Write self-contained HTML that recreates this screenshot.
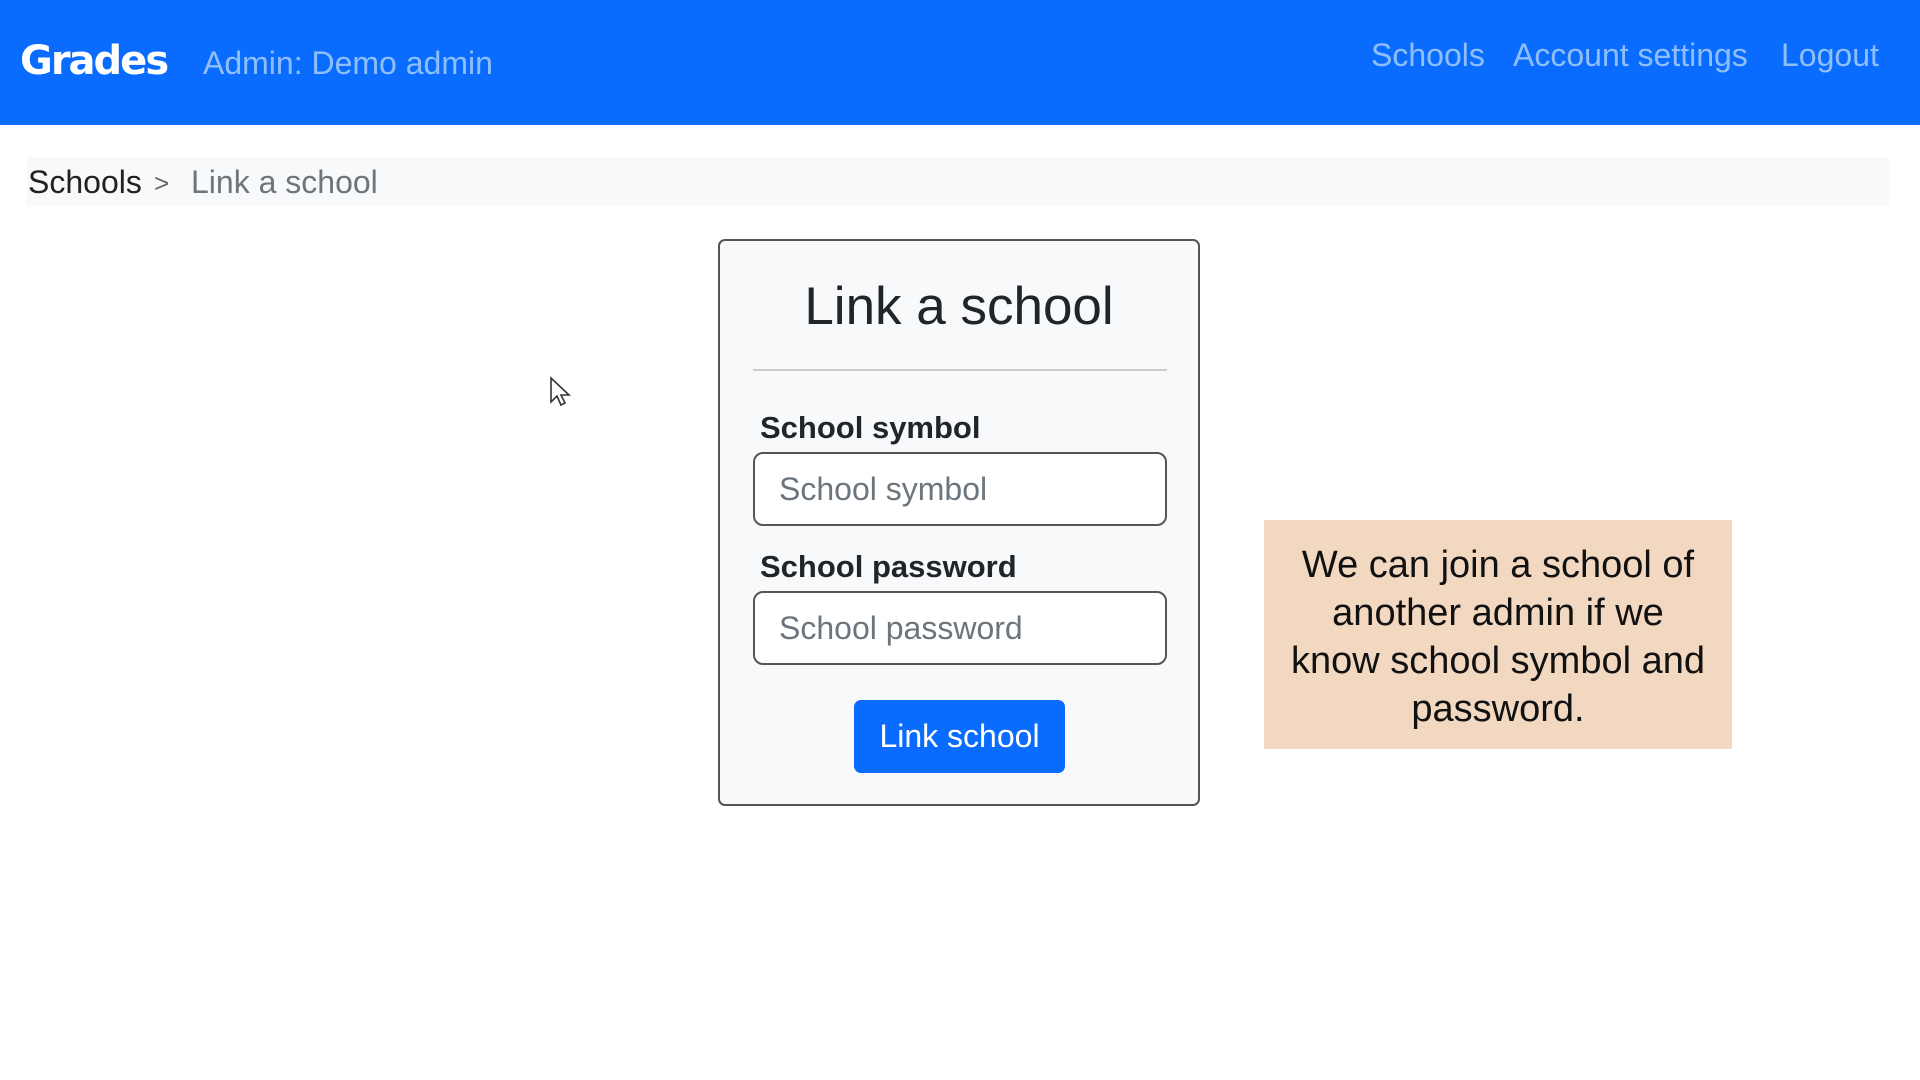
<!DOCTYPE html>
<html><head><meta charset="utf-8"><style>
*{margin:0;padding:0;box-sizing:border-box}
body{width:1920px;height:1080px;background:#fff;font-family:"Liberation Sans",sans-serif;position:relative;overflow:hidden;color:#212529}
.nav{position:absolute;left:0;top:0;width:1920px;height:125px;background:#0a6cff}
.abs{position:absolute;white-space:nowrap}
.logo{left:20px;top:38px;font-size:40px;font-weight:900;color:#fff;font-family:"DejaVu Sans",sans-serif;letter-spacing:-2px}
.adm{left:203px;top:45px;font-size:32px;color:#8fbffb}
.nl{top:37px;font-size:32px;color:#8fbffb}
.bc{position:absolute;left:27px;top:157px;width:1862px;height:49px;background:#f8f9fa}
.card{position:absolute;left:718px;top:239px;width:482px;height:567px;background:#f8f9fa;border:2px solid #555;border-radius:7px}
.inp{position:absolute;left:33px;width:414px;height:74px;background:#fff;border:2px solid #555;border-radius:10px;font-size:32px;color:#6c757d;padding-left:24px;line-height:70px}
.lbl{position:absolute;left:40px;font-size:31px;font-weight:bold}
.btn{position:absolute;left:134px;top:459px;width:211px;height:73px;background:#0a6cff;border-radius:7px;color:#fff;font-size:32px;text-align:center;line-height:72px}
.tip{position:absolute;left:1264px;top:520px;width:468px;height:229px;background:#f2d7c1;font-size:38px;line-height:48px;text-align:center;padding-top:21px;color:#111}
</style></head><body>
<div class="nav">
<div class="abs logo">Grades</div>
<div class="abs adm">Admin: Demo admin</div>
<div class="abs nl" style="left:1371px">Schools</div>
<div class="abs nl" style="left:1513px">Account settings</div>
<div class="abs nl" style="left:1781px">Logout</div>
</div>
<div class="bc"></div>
<div class="abs" style="left:28px;top:164px;font-size:32px;color:#222">Schools</div>
<div class="abs" style="left:154px;top:168px;font-size:26px;color:#666">&gt;</div>
<div class="abs" style="left:191px;top:164px;font-size:32px;color:#6c757d">Link a school</div>
<div class="card">
<div class="abs" style="left:0;width:478px;text-align:center;top:35px;font-size:53px">Link a school</div>
<div style="position:absolute;left:33px;top:128px;width:414px;height:2px;background:#ccc"></div>
<div class="lbl" style="top:169px">School symbol</div>
<div class="inp" style="top:211px">School symbol</div>
<div class="lbl" style="top:308px">School password</div>
<div class="inp" style="top:350px">School password</div>
<div class="btn">Link school</div>
</div>
<svg style="position:absolute;left:549px;top:376px" width="22" height="32" viewBox="0 0 22 32"><path d="M2 2 L2 26 L8 20 L12 29 L16 27 L12 19 L20 19 Z" fill="#fff" stroke="#333" stroke-width="1.6"/></svg>
<div class="tip">We can join a school of<br>another admin if we<br>know school symbol and<br>password.</div>
</body></html>
